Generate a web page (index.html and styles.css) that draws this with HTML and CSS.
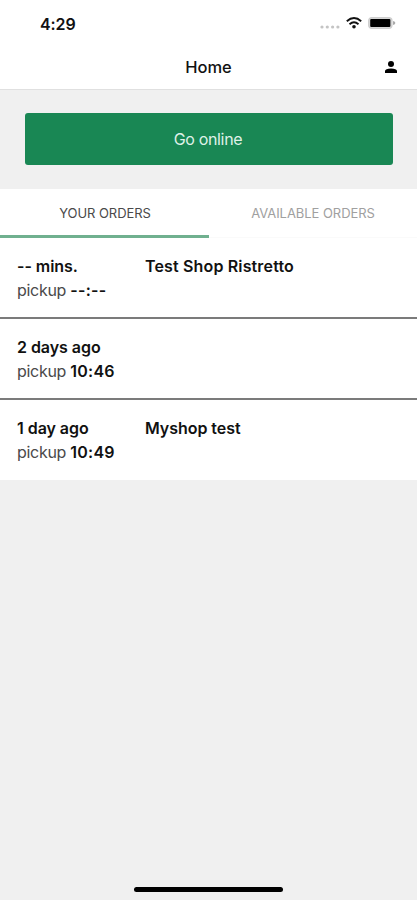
FILE: index.html
```html
<!DOCTYPE html>
<html lang="en">
<head>
<meta charset="utf-8">
<title>Home</title>
<link rel="stylesheet" href="styles.css">
</head>
<body>
<div class="app">
  <div class="status">
    <span class="time">4:29</span>
    <div class="indicators">
      <svg class="dots" width="20" height="4" viewBox="0 0 20 4"><g fill="#c4c4c4"><circle cx="2" cy="2" r="1.6"/><circle cx="7.3" cy="2" r="1.6"/><circle cx="12.6" cy="2" r="1.6"/><circle cx="17.9" cy="2" r="1.6"/></g></svg>
      <svg class="wifi" width="16" height="12" viewBox="0 0 16 12"><g fill="none" stroke="#111" stroke-width="1.9"><path d="M.8 4.2Q8-2 15.2 4.2"/><path d="M3.5 7.2Q8 3.3 12.5 7.2"/></g><circle cx="8" cy="9.8" r="1.8" fill="#111"/></svg>
      <svg class="battery" width="28" height="12" viewBox="0 0 28 12"><rect x=".7" y=".7" width="23.2" height="10.6" rx="3" fill="#ddd" stroke="#cfcfcf" stroke-width="1.4"/><rect x="2.2" y="2" width="20.2" height="8" rx="1"/><path d="M25 4v4q2.4-.5 2.4-2T25 4" fill="#aaa"/></svg>
    </div>
  </div>
  <header class="header">
    <h1>Home</h1>
    <svg class="user" width="12" height="12" viewBox="0 0 12 12"><circle cx="6" cy="3" r="3"/><path d="M0 12v-1.9C0 8.3 2.3 7.4 6 7.4s6 .9 6 2.7V12Z"/></svg>
  </header>
  <section class="action"><button class="online">Go online</button></section>
  <nav class="tabs">
    <div class="tab active"><span>YOUR ORDERS</span></div>
    <div class="tab"><span>AVAILABLE ORDERS</span></div>
  </nav>
  <main class="orders">
    <article class="order"><div class="when"><b>-- mins.</b><p>pickup <b>--:--</b></p></div><b class="shop wide">Test Shop Ristretto</b></article>
    <article class="order"><div class="when"><b>2 days ago</b><p>pickup <b>10:46</b></p></div></article>
    <article class="order"><div class="when"><b>1 day ago</b><p>pickup <b>10:49</b></p></div><b class="shop">Myshop test</b></article>
  </main>
  <div class="home-bar"></div>
</div>
</body>
</html>
```
FILE: styles.css
```css
* { box-sizing: border-box; }
body { margin: 0; font-family: Inter, "Liberation Sans", sans-serif; color: #111; }
.app { width: 417px; height: 900px; background: #f0f0f0; display: flex; flex-direction: column; }
.status { height: 46px; background: #fff; display: flex; justify-content: space-between; padding: 1px 21px 0 40px; align-items: center; }
.time { font-size: 16px; font-weight: 600; letter-spacing: -.1px; }
.indicators { display: flex; align-items: center; gap: 6px; padding-bottom: 1px; }
.dots { margin-top: 8px; }
.header { height: 44px; background: #fff; border-bottom: 1px solid #e0e0e0; display: grid; grid-template-columns: 1fr auto 1fr; align-items: center; padding: 0 20px 1px; }
h1 { grid-column: 2; margin: 0; font-size: 16.5px; font-weight: 500; }
.user { justify-self: end; }
.action { height: 99px; padding: 23px 24px 24px 25px; }
.online { display: block; width: 100%; height: 52px; border: 0; border-radius: 3px; background: #198754; color: #dff1e7; font: 16px Inter, "Liberation Sans", sans-serif; letter-spacing: -.35px; padding: 0 2px 0 0; }
.tabs { display: flex; height: 49px; background: #fff; }
.tab { flex: 1; display: flex; justify-content: center; padding-top: 16px; font-size: 13px; line-height: 16px; color: #a0a0a0; letter-spacing: -.05px; border-bottom: 1px solid #fafafa; }
.active { color: #4a4a4a; border-bottom: 3px solid #70b08f; padding-left: 1px; }
.orders { background: #fff; }
.order { height: 81px; display: flex; padding: 16px 17px; font-size: 16px; line-height: 24px; letter-spacing: -.05px; border-bottom: 2px solid #7b7b7b; }
.order:last-child { height: 80px; border: 0; }
.order b { font-weight: 600; }
.when { width: 128px; white-space: nowrap; }
.order .wide { letter-spacing: .15px; }
p { margin: 0; color: #4a4a4a; letter-spacing: -.3px; }
p b { color: #111; letter-spacing: .25px; }
.home-bar { width: 149px; height: 5px; border-radius: 3px; background: #000; margin: auto auto 8px; }
```
